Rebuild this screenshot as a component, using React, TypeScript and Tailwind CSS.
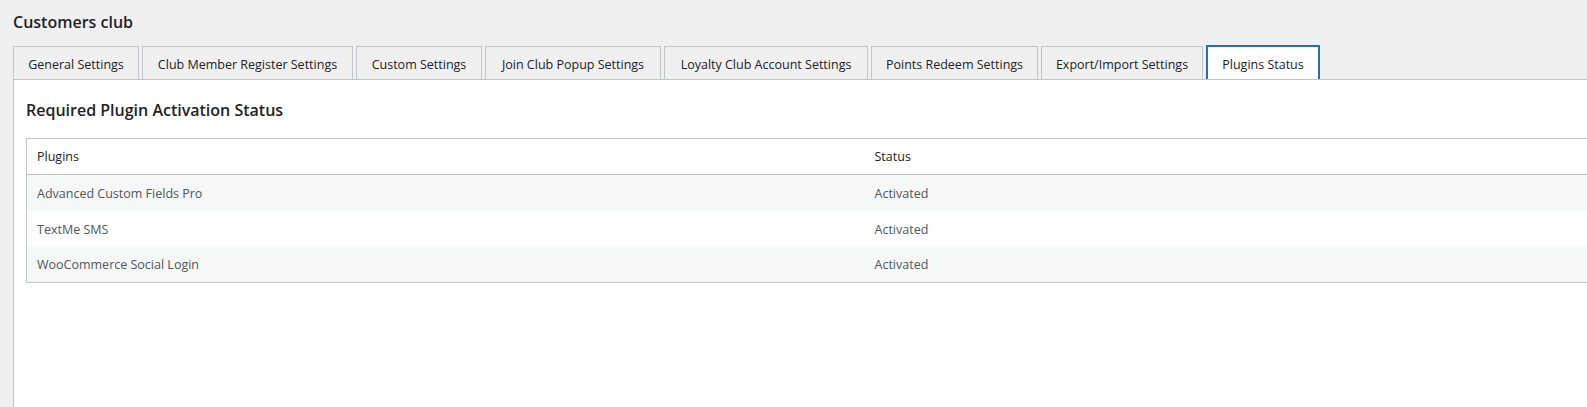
const TABS = [
  { label: 'General Settings', w: 'w-[126px]' },
  { label: 'Club Member Register Settings', w: 'w-[211px]' },
  { label: 'Custom Settings', w: 'w-[126px]' },
  { label: 'Join Club Popup Settings', w: 'w-[176px]' },
  { label: 'Loyalty Club Account Settings', w: 'w-[204px]' },
  { label: 'Points Redeem Settings', w: 'w-[167px]' },
  { label: 'Export/Import Settings', w: 'w-[162px]' },
]

const PLUGINS = ['Advanced Custom Fields Pro', 'TextMe SMS', 'WooCommerce Social Login']

export default function App() {
  return (
    <div className="h-[407px] w-full overflow-hidden bg-[#f0f0f1] font-['Open_Sans',sans-serif] text-[#1d2327]">
      <h1 className="pl-[13px] pt-[11px] text-[16px] font-semibold leading-[23px]">Customers club</h1>

      <nav className="mt-[11px] flex items-end pl-[13px]">
        {TABS.map((t) => (
          <div
            key={t.label}
            className={`${t.w} mr-[3px] flex h-[33px] items-center justify-center border border-b-0 border-[#c3c4c7] bg-[#f0f0f1] pt-[4px] text-[12.5px] text-[#1d2327]`}
          >
            {t.label}
          </div>
        ))}
        <div className="flex h-[34px] w-[114px] items-center justify-center border-2 border-b-0 border-[#2271b1] bg-white pt-[4px] text-[12.5px] text-[#1d2327]">
          Plugins Status
        </div>
      </nav>

      <div className="ml-[13px] h-[400px] w-[1600px] border-l border-t border-[#c3c4c7] bg-white pl-[12px]">
        <h2 className="pt-[20px] text-[16px] font-semibold leading-[20px]">Required Plugin Activation Status</h2>

        <table className="mt-[18px] w-[1580px] border-collapse border border-[#c3c4c7] text-[12.5px]">
          <thead>
            <tr className="h-[36px] border-b border-[#c3c4c7]">
              <th className="w-[838px] px-[10px] pt-[1px] text-left font-normal text-[#1d2327]">Plugins</th>
              <th className="px-[10px] pt-[1px] text-left font-normal text-[#1d2327]">Status</th>
            </tr>
          </thead>
          <tbody>
            {PLUGINS.map((p, i) => (
              <tr key={p} className={`h-[36px] ${i % 2 === 0 ? 'bg-[#f6f7f7]' : 'bg-white'}`}>
                <td className="px-[10px] pt-[3px] text-[#50575e]">{p}</td>
                <td className="px-[10px] pt-[3px] text-[#50575e]">Activated</td>
              </tr>
            ))}
          </tbody>
        </table>
      </div>
    </div>
  )
}
